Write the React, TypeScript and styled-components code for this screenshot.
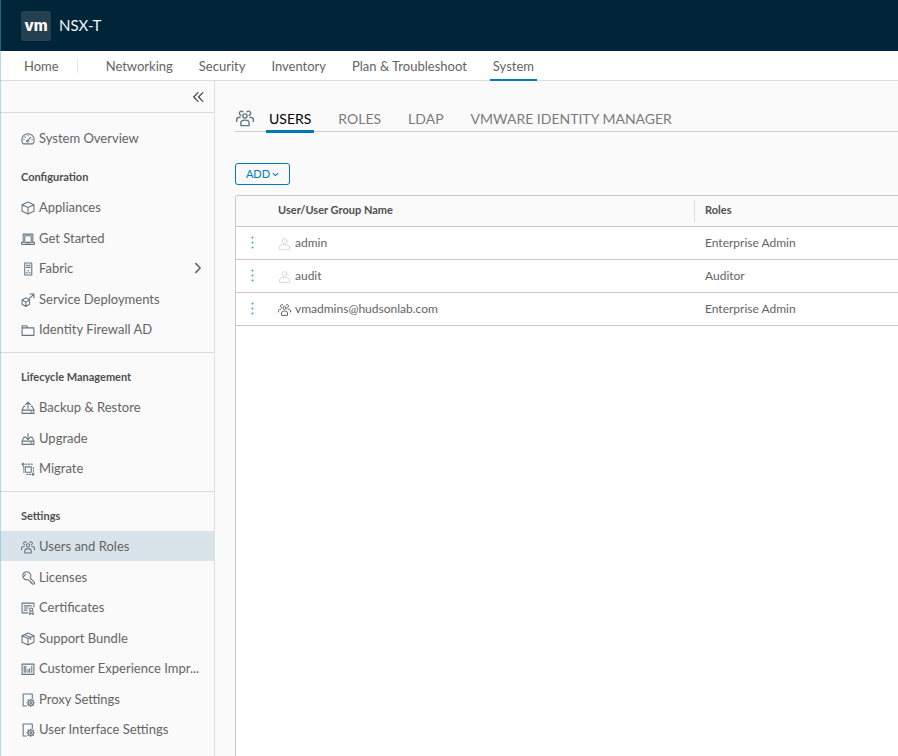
import React from "react";
import styled, { createGlobalStyle } from "styled-components";

const color = {
  header: "#002538",
  text: "#646464",
  muted: "#7a7a7a",
  title: "#4f4f4f",
  strong: "#3d3d3d",
  icon: "#66757f",
  line: "#d9d9d9",
  grid: "#c8c8c8",
  panel: "#fafafa",
  accent: "#0079b8",
  selected: "#d9e3ea",
};

const GlobalStyle = createGlobalStyle`
  *, *::before, *::after { box-sizing: border-box; }
  body {
    margin: 0;
    background: ${color.panel};
    color: ${color.text};
    font-family: Lato, "Open Sans", sans-serif;
    font-size: 13px;
    line-height: 18px;
  }
  a { color: inherit; text-decoration: none; }
  button { font: inherit; color: inherit; cursor: pointer; }
`;

const Page = styled.div`
  display: flex;
  flex-direction: column;
  min-height: 100vh;

  &::before {
    content: "";
    position: fixed;
    inset: 0 auto 0 0;
    z-index: 1;
    width: 1px;
    background: rgba(72, 184, 228, 0.45);
  }
`;

const Header = styled.header`
  display: flex;
  align-items: center;
  gap: 8px;
  height: 51px;
  padding: 0 20px 0 21px;
  background: ${color.header};
  color: #f2f5f7;
`;

const Logo = styled.span`
  display: flex;
  align-items: center;
  justify-content: center;
  width: 30px;
  height: 30px;
  border-radius: 2px;
  background: #243f50;
  color: #fff;
  font-family: Inter, sans-serif;
  font-size: 15px;
  font-weight: 800;
  line-height: 30px;
`;

const Product = styled.h1`
  margin: 0;
  padding-bottom: 2px;
  font-size: 15px;
  font-weight: 400;
  line-height: 18px;
`;

const MainNav = styled.nav`
  display: flex;
  align-items: stretch;
  height: 30px;
  padding-left: 21px;
  border-bottom: 1px solid #dedede;
  background: #fff;
`;

const NavGroup = styled.div`
  display: flex;
  gap: 20px;
`;

const NavLink = styled.a<{ $active?: boolean }>`
  position: relative;
  display: flex;
  align-items: center;
  padding: 0 3px;

  &::after {
    content: "";
    display: ${(p) => (p.$active ? "block" : "none")};
    position: absolute;
    inset: auto 0 -1px 0;
    height: 2px;
    background: ${color.accent};
  }
`;

const NavDivider = styled.span`
  align-self: center;
  width: 1px;
  height: 15px;
  margin: 0 25px 0 15px;
  background: #e8e8e8;
`;

const Body = styled.div`
  display: flex;
  flex: 1;
`;

const Sidebar = styled.aside`
  flex: 0 0 215px;
  min-width: 0;
  border-right: 1px solid #e0e0e0;
  background: ${color.panel};
`;

const SidebarTop = styled.div`
  display: flex;
  align-items: center;
  justify-content: flex-end;
  height: 32px;
  padding-right: 9px;
  border-bottom: 1px solid ${color.line};
`;

const CollapseButton = styled.button`
  display: flex;
  padding: 0;
  border: 0;
  background: none;
`;

const Section = styled.section<{ $divided?: boolean }>`
  padding: ${(p) => (p.$divided ? "8px 0" : "0 0 8px")};
  border-top: ${(p) => (p.$divided ? `1px solid ${color.line}` : "0")};
`;

const SectionTitle = styled.h2`
  margin: 0;
  padding-left: 21px;
  font-size: 11px;
  font-weight: 700;
  line-height: 31px;
  color: ${color.title};
`;

const Overview = styled.div`
  padding: 10px 0 8px;
`;

const MenuList = styled.ul`
  display: grid;
  grid-template-columns: minmax(0, 1fr);
  grid-auto-rows: 30px 31px;
  margin: 0;
  padding: 0;
  list-style: none;
`;

const MenuItem = styled.li`
  display: grid;
`;

const MenuLink = styled.a<{ $selected?: boolean }>`
  display: flex;
  align-items: center;
  gap: 4px;
  min-width: 0;
  padding: 0 9px 0 21px;
  background: ${(p) => (p.$selected ? color.selected : "transparent")};

  & > svg:first-child {
    margin-top: 2px;
  }
`;

const MenuText = styled.span`
  flex: 1;
  min-width: 0;
  white-space: nowrap;
`;

const Glyph = styled.svg<{ $size: number; $color: string }>`
  flex: none;
  width: ${(p) => p.$size}px;
  height: ${(p) => p.$size}px;
  fill: none;
  stroke: ${(p) => p.$color};
  stroke-linecap: round;
  stroke-linejoin: round;
`;

const Main = styled.main`
  display: flex;
  flex: 1;
  flex-direction: column;
  min-width: 0;
  padding: 25px 0 0 20px;
`;

const Tabs = styled.div`
  display: flex;
  gap: 21px;
  height: 26px;
  border-bottom: 1px solid #cfcfcf;
  font-size: 14px;
`;

const TabIcon = styled.span`
  display: flex;
  align-items: flex-start;
  width: 31px;
  margin-right: -21px;
  padding: 3px 0 0 1px;
`;

const Tab = styled.button<{ $active?: boolean }>`
  position: relative;
  padding: 0 3px;
  border: 0;
  background: none;
  white-space: nowrap;
  color: ${(p) => (p.$active ? "#000" : color.muted)};

  &::after {
    content: "";
    display: ${(p) => (p.$active ? "block" : "none")};
    position: absolute;
    inset: auto 0 -2px 0;
    height: 3px;
    background: ${color.accent};
  }
`;

const AddButton = styled.button`
  display: flex;
  align-items: center;
  justify-content: center;
  align-self: flex-start;
  gap: 2px;
  width: 55px;
  height: 22px;
  margin: 31px 0 10px;
  padding: 0;
  border: 1px solid ${color.accent};
  border-radius: 3px;
  background: transparent;
  color: ${color.accent};
  font-size: 11px;
  line-height: 16px;
`;

const GridPanel = styled.div`
  flex: 1;
  border: 1px solid ${color.grid};
  border-width: 1px 0 0 1px;
  border-radius: 3px 0 0 0;
  background: #fff;
`;

const Grid = styled.table`
  width: 100%;
  border-collapse: separate;
  border-spacing: 0;
  table-layout: fixed;
  font-size: 12px;
`;

const HeadCell = styled.th<{ $width?: number }>`
  width: ${(p) => (p.$width ? `${p.$width}px` : "auto")};
  height: 31px;
  padding: 0 0 0 10px;
  border-bottom: 1px solid ${color.grid};
  background: ${color.panel};
  color: ${color.title};
  text-align: left;
  font-size: 11px;
  font-weight: 700;
  line-height: 20px;
`;

const HeadLabel = styled.span<{ $divided?: boolean }>`
  display: block;
  margin-left: -11px;
  padding: 0 0 2px 10px;
  border-left: 1px solid ${(p) => (p.$divided ? "#dfdfdf" : "transparent")};
`;

const Cell = styled.td`
  height: 33px;
  padding: 0 0 1px 10px;
  border-bottom: 1px solid ${color.grid};
  line-height: 16px;
`;

const UserName = styled.span`
  display: flex;
  align-items: center;
  gap: 4px;

  & > svg {
    margin-top: 1px;
  }
`;

const RowMenu = styled.button`
  display: flex;
  justify-content: center;
  width: 13px;
  padding: 0;
  border: 0;
  background: none;
`;

type IconName =
  | "gauge" | "cube" | "laptop" | "host" | "deploy" | "folder" | "backup" | "upgrade"
  | "migrate" | "users" | "key" | "certificate" | "bundle" | "chart" | "settings"
  | "user" | "right" | "down" | "collapse" | "dots";

/* Every drawing uses a 26 by 26 box. */
const drawings: Record<IconName, React.ReactNode> = {
  gauge: (
    <>
      <path d="M4 22A11.500 11.500 0 1 1 22 22Z" />
      <path d="M12 16l6-6M13 6v1M5 14h1M20 14h1M7 9l1 1" />
      <circle cx="12" cy="17" r="1.500" />
    </>
  ),
  cube: <path d="M13 2l11 5v12l-11 5-11-5V7zM2 7l11 5 11-5M13 12v12" />,
  laptop: (
    <>
      <path d="M4 18V4h18v14M7 17V7h12v10" />
      <path d="M1 19h24v3q0 1-1 1H2q-1 0-1-1zM10 20h6" />
    </>
  ),
  host: (
    <>
      <path d="M7 2h13v22H7z" />
      <path d="M10 6h7M10 10h7M10 20h2M15 20h2M13 16h1" />
    </>
  ),
  deploy: (
    <>
      <path d="M9 9l7 4v8l-7 4-7-4v-8zM2 13l7 4 7-4M9 17v8" />
      <path d="M15 11l9-9M17 2h7v7" />
    </>
  ),
  folder: <path d="M2 23V5h8l3 4h11v14zM2 9h11" />,
  backup: (
    <>
      <path d="M7 10H5l-3 7v6h22v-6l-3-7h-2M2 17h22M18 20h2" />
      <path d="M13 14V3M8 7l5-5 5 5" />
    </>
  ),
  upgrade: (
    <>
      <path d="M7 10H5l-3 7v6h22v-6l-3-7h-2M2 17h22M18 20h2" />
      <path d="M13 3v11M8 9l5 5 5-5" />
    </>
  ),
  migrate: (
    <>
      <path d="M8 9h11v10H8z" />
      <path d="M2 4h4M9 4h2M14 4h2M19 4h2M4 2L2 4l2 3M5 8v2M5 13v2M5 18v1M24 23h-3M18 23h-2M13 23h-2M22 20l2 3-2 2M23 10v2M23 15v2" />
    </>
  ),
  users: (
    <>
      <circle cx="13" cy="10" r="3" />
      <path d="M7 24v-4q0-4 6-4t6 4v4z" />
      <path d="M7 9A3 3 0 1 1 10 4M19 9A3 3 0 1 0 16 4" />
      <path d="M1 18v-3q0-3 5-3M25 18v-3q0-3-5-3" />
    </>
  ),
  key: (
    <>
      <path d="M17 13l8 8v3h-4l-1-2h-2v-2l-5-4a7.500 7.500 0 1 1 4-3z" />
      <path d="M5 10l4-4" />
    </>
  ),
  certificate: (
    <>
      <path d="M13 22H2V4h22v7M6 9h13M6 13h7M6 17h5" />
      <circle cx="19" cy="16" r="3" />
      <path d="M17 19l-1 6 3-2 4 2-1-6" />
    </>
  ),
  bundle: <path d="M13 2l11 5v12l-11 5-11-5V7zM2 7l11 5 11-5M13 12v12M7 5l11 5v4" />,
  chart: (
    <>
      <path d="M2 4h22v19H2z" />
      <path d="M6 8v11M9 8v11M13 14v5M16 12v7M20 8v11" />
    </>
  ),
  settings: (
    <>
      <path d="M10 24H4V2h17v8" />
      <circle cx="18" cy="18" r="5" />
      <circle cx="18" cy="18" r="1.500" />
      <path d="M18 11v2M18 23v2M11 18h2M23 18h2M13 13l1 1M22 22l1 1M13 23l1-1M22 14l1-1" />
    </>
  ),
  user: (
    <>
      <circle cx="13" cy="8" r="5" />
      <path d="M3 24v-4q0-5 10-5t10 5v4z" />
    </>
  ),
  right: <path d="M9 5l8 8-8 8" />,
  down: <path d="M4 9l9 8 9-8" />,
  collapse: <path d="M13 5l-8 8 8 8M22 5l-8 8 8 8" />,
  dots: <path d="M13 3v0M13 13v0M13 23v0" />,
};

interface IconProps {
  name: IconName;
  size?: number;
  tone?: string;
  weight?: number;
}

function Icon({ name, size = 14, tone = color.icon, weight = 2 }: IconProps) {
  return (
    <Glyph viewBox="0 0 26 26" $size={size} $color={tone} strokeWidth={weight} aria-hidden="true">
      {drawings[name]}
    </Glyph>
  );
}

interface Entry {
  label: string;
  icon: IconName;
  expandable?: boolean;
  selected?: boolean;
}

const sections: { title: string; items: Entry[] }[] = [
  {
    title: "Configuration",
    items: [
      { label: "Appliances", icon: "cube" },
      { label: "Get Started", icon: "laptop" },
      { label: "Fabric", icon: "host", expandable: true },
      { label: "Service Deployments", icon: "deploy" },
      { label: "Identity Firewall AD", icon: "folder" },
    ],
  },
  {
    title: "Lifecycle Management",
    items: [
      { label: "Backup & Restore", icon: "backup" },
      { label: "Upgrade", icon: "upgrade" },
      { label: "Migrate", icon: "migrate" },
    ],
  },
  {
    title: "Settings",
    items: [
      { label: "Users and Roles", icon: "users", selected: true },
      { label: "Licenses", icon: "key" },
      { label: "Certificates", icon: "certificate" },
      { label: "Support Bundle", icon: "bundle" },
      { label: "Customer Experience Impr...", icon: "chart" },
      { label: "Proxy Settings", icon: "settings" },
      { label: "User Interface Settings", icon: "settings" },
    ],
  },
];

const areas = ["Networking", "Security", "Inventory", "Plan & Troubleshoot", "System"];
const tabs = ["USERS", "ROLES", "LDAP", "VMWARE IDENTITY MANAGER"];

const users: { name: string; role: string; group?: boolean }[] = [
  { name: "admin", role: "Enterprise Admin" },
  { name: "audit", role: "Auditor" },
  { name: "vmadmins@hudsonlab.com", role: "Enterprise Admin", group: true },
];

function Menu({ items }: { items: Entry[] }) {
  return (
    <MenuList>
      {items.map((item) => (
        <MenuItem key={item.label}>
          <MenuLink href="#" $selected={item.selected} aria-current={item.selected ? "page" : undefined}>
            <Icon name={item.icon} />
            <MenuText>{item.label}</MenuText>
            {item.expandable && <Icon name="right" tone={color.text} weight={3} />}
          </MenuLink>
        </MenuItem>
      ))}
    </MenuList>
  );
}

export default function App() {
  return (
    <Page>
      <GlobalStyle />
      <Header>
        <Logo>vm</Logo>
        <Product>NSX-T</Product>
      </Header>
      <MainNav aria-label="Main">
        <NavLink href="#">Home</NavLink>
        <NavDivider />
        <NavGroup>
          {areas.map((area) => (
            <NavLink key={area} href="#" $active={area === "System"}>
              {area}
            </NavLink>
          ))}
        </NavGroup>
      </MainNav>
      <Body>
        <Sidebar>
          <SidebarTop>
            <CollapseButton aria-label="Collapse menu">
              <Icon name="collapse" tone={color.strong} />
            </CollapseButton>
          </SidebarTop>
          <Overview>
            <Menu items={[{ label: "System Overview", icon: "gauge" }]} />
          </Overview>
          {sections.map((section, index) => (
            <Section key={section.title} $divided={index > 0}>
              <SectionTitle>{section.title}</SectionTitle>
              <Menu items={section.items} />
            </Section>
          ))}
        </Sidebar>
        <Main>
          <Tabs role="tablist">
            <TabIcon>
              <Icon name="users" size={18} />
            </TabIcon>
            {tabs.map((tab) => (
              <Tab key={tab} role="tab" aria-selected={tab === "USERS"} $active={tab === "USERS"}>
                {tab}
              </Tab>
            ))}
          </Tabs>
          <AddButton>
            ADD
            <Icon name="down" size={7} tone={color.accent} weight={4} />
          </AddButton>
          <GridPanel>
            <Grid>
              <thead>
                <tr>
                  <HeadCell $width={32} aria-label="Actions" />
                  <HeadCell>
                    <HeadLabel>User/User Group Name</HeadLabel>
                  </HeadCell>
                  <HeadCell $width={203}>
                    <HeadLabel $divided>Roles</HeadLabel>
                  </HeadCell>
                </tr>
              </thead>
              <tbody>
                {users.map((user) => (
                  <tr key={user.name}>
                    <Cell>
                      <RowMenu aria-label={`Actions for ${user.name}`}>
                        <Icon name="dots" size={13} tone="#2fa3d3" weight={4} />
                      </RowMenu>
                    </Cell>
                    <Cell>
                      <UserName>
                        <Icon
                          name={user.group ? "users" : "user"}
                          size={13}
                          tone={user.group ? color.text : "#dadada"}
                        />
                        {user.name}
                      </UserName>
                    </Cell>
                    <Cell>{user.role}</Cell>
                  </tr>
                ))}
              </tbody>
            </Grid>
          </GridPanel>
        </Main>
      </Body>
    </Page>
  );
}
